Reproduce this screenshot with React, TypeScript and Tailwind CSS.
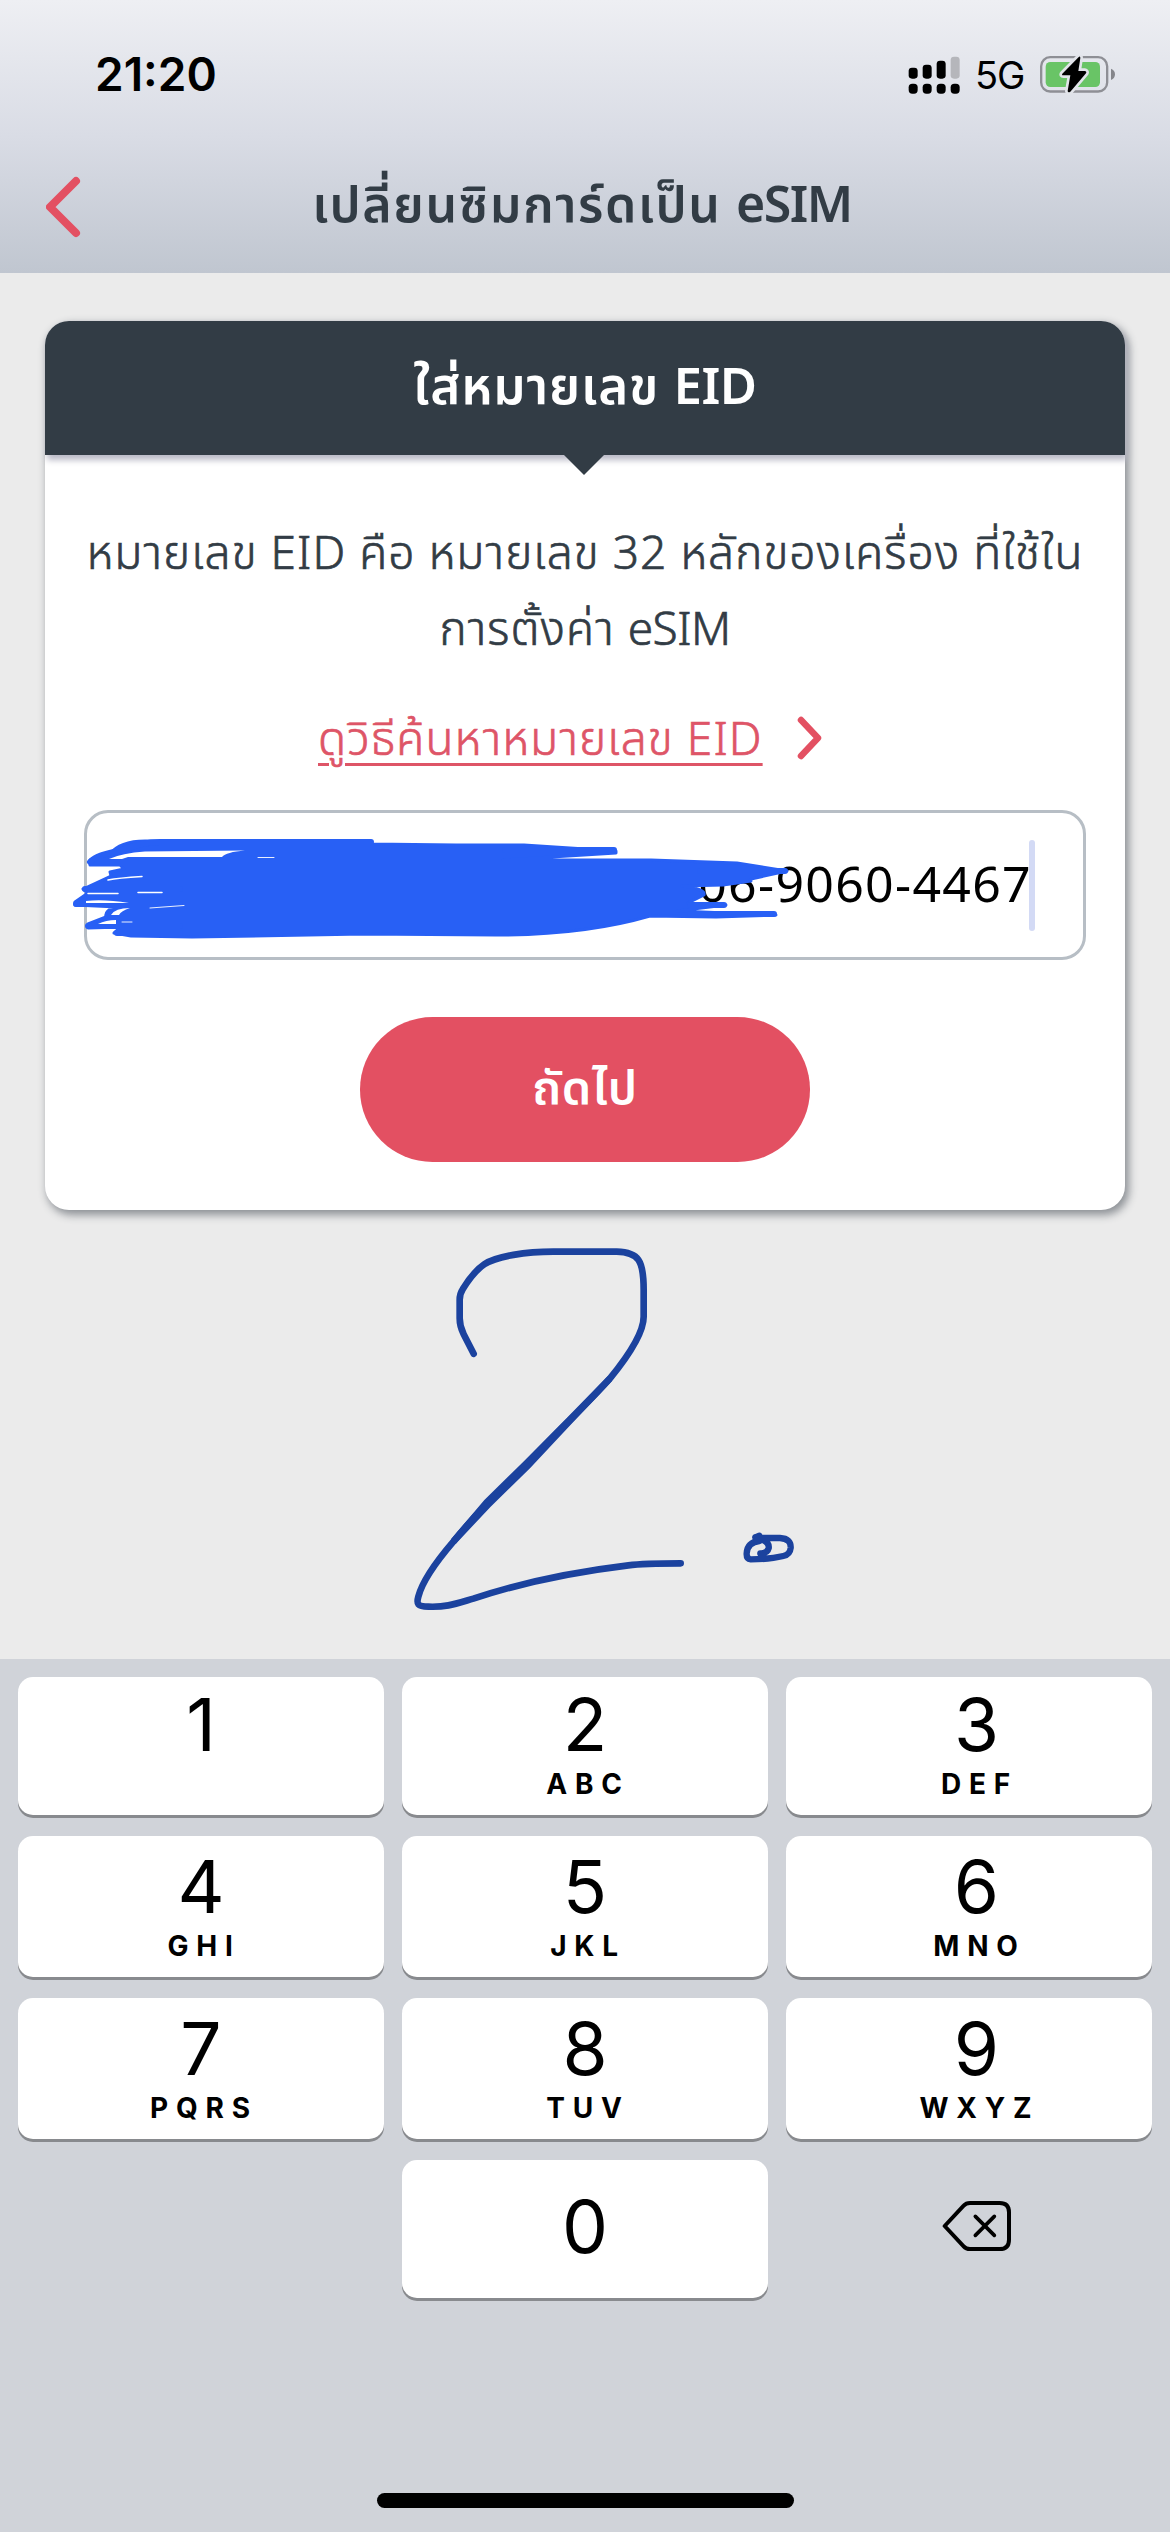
import { useState } from 'react'

const KEYS = [
  { digit: '1', letters: '' },
  { digit: '2', letters: 'ABC' },
  { digit: '3', letters: 'DEF' },
  { digit: '4', letters: 'GHI' },
  { digit: '5', letters: 'JKL' },
  { digit: '6', letters: 'MNO' },
  { digit: '7', letters: 'PQRS' },
  { digit: '8', letters: 'TUV' },
  { digit: '9', letters: 'WXYZ' },
]

const keyClass =
  'flex flex-col items-center rounded-[15px] bg-white text-black shadow-[0_3px_0_#888a8e]'

function SignalIcon() {
  return (
    <svg width="52" height="38" viewBox="0 0 156 114">
      <rect x="2" y="35" width="27" height="33" rx="10" />
      <rect x="44" y="26" width="27" height="42" rx="10" />
      <rect x="86" y="14" width="27" height="54" rx="10" />
      <rect x="128" y="2" width="27" height="66" rx="10" fill="#b5b6bb" />
      <rect x="2" y="83" width="27" height="30" rx="11" />
      <rect x="44" y="83" width="27" height="30" rx="11" />
      <rect x="86" y="83" width="27" height="30" rx="11" />
      <rect x="128" y="83" width="27" height="30" rx="11" />
    </svg>
  )
}

function BatteryIcon() {
  const bolt = 'M117 5L67 56Q64 61 70 61H91L83 108Q84 115 91 110L138 55Q141 49 134 48H115L121 9Q121 3 117 5Z'
  return (
    <svg width="76" height="40" viewBox="0 0 228 120">
      <rect x="3.500" y="6.500" width="198" height="103" rx="27" fill="none" stroke="#8e8f95" strokeWidth="7" />
      <rect x="17" y="21" width="163" height="75" rx="14" fill="#69c466" />
      <path d="M213 41Q225 46 225 58T213 75Z" fill="#85868b" />
      <path d={bolt} fill="#e2e4ea" stroke="#e2e4ea" strokeWidth="16" strokeLinejoin="round" />
      <path d={bolt} />
    </svg>
  )
}

function Header() {
  return (
    <header className="h-[273px] bg-linear-to-b from-[#eeeff3] via-[#d9dce5] to-[#c0c6d0]">
      <div className="h-[150px] flex items-start justify-between pl-[95px] pr-[54px] pt-[44px]">
        <span className="font-[Inter] text-[46px] leading-[60px] font-semibold">21:20</span>
        <div className="flex items-center mt-[1px]">
          <SignalIcon />
          <span className="ml-[15px] w-[51px] font-[Inter] text-[38px] leading-[60px] tracking-[-1px]">5G</span>
          <div className="ml-[14px]">
            <BatteryIcon />
          </div>
        </div>
      </div>
      <div className="flex h-[108px] items-center pl-[46px]">
        <button className="mt-[5px]">
          <svg width="36" height="62" viewBox="0 0 36 62" fill="none" stroke="#e35062" strokeWidth="8" strokeLinecap="round" strokeLinejoin="round">
            <path d="M30 5L4 31L30 57" />
          </svg>
        </button>
        <h1 className="mt-[-2px] w-[1000px] text-center text-[50px] leading-[76px] font-semibold tracking-[1.6px] text-[#323c45]">
          เปลี่ยนซิมการ์ดเป็น <span className="tracking-[-1.5px]">eSIM</span>
        </h1>
      </div>
    </header>
  )
}

function Scribble() {
  return (
    <svg className="absolute left-[-17px] top-[22px]" width="730" height="110" viewBox="70 836 730 110" fill="none" strokeLinecap="round" strokeLinejoin="round">
      <path
        d="M110 855Q120 842 145 842H371V845L456 846L524 846L616 852V854L503 861L580 861L651 861L737 864L787 872L751 880V882L723 886L682 887Q706 890 704 896L688 904L726 906L677 912L776 916L716 918L650 917Q585 936 496 936L363 935L192 938L131 937L114 934L121 928L88 929V925L106 918Q104 911 117 908L75 906V903L88 894L83 890L96 884L111 877L110 873L124 870L120 866L90 866V861Z"
        fill="#2860f5"
        stroke="#2860f5"
        strokeWidth="3"
      />
      <path d="M90 863Q98 855 120 852Q142 843 160 843H371M505 851H614M700 872H785M85 890H180M76 905H180M88 927H180M117 934H180M690 906H724M690 915H774" stroke="#2860f5" strokeWidth="6" />
      <path d="M109 860Q122 854 145 852.500L245 851.500Q226 853 222 858H128L122 860Z" fill="#fff" />
      <path d="M108 881Q118 879 142 877.500M88 894.500H118M138 893.500H162" stroke="#fff" strokeWidth="1.500" />
      <path d="M86 902Q104 900 129 904H86ZM111 916Q115 909 130 909Q121 912 119 916ZM98 925Q106 921 116 921V925Z" fill="#fff" />
      <path d="M150 909L184 906.500M122 923H132M258 858.500H274" stroke="#fff" strokeWidth="0.900" />
    </svg>
  )
}

function EidInput({ value }: { value: string }) {
  return (
    <div className="relative mx-[39px] mt-[34px] flex h-[150px] items-center justify-end rounded-[24px] border-3 border-[#b7bec5] pr-[48px]">
      <span className="mt-[-4px] text-[50px] leading-[76px] tracking-[1.3px] text-black">{value}</span>
      <span className="ml-[-3px] h-[91px] w-[6px] rounded-full bg-[#d3daf5]" />
      <Scribble />
    </div>
  )
}

function EidCard({ value }: { value: string }) {
  return (
    <section className="mx-[45px] mt-[48px] h-[889px] rounded-[24px] bg-white shadow-[3px_4px_8px_1px_#8d9196]">
      <div className="relative h-[134px] rounded-t-[24px] bg-[#323c45] text-center shadow-[2px_5px_6px_#b9b9c6]">
        <h2 className="pt-[25px] text-[51px] leading-[76px] font-semibold tracking-[0.9px] text-white">
          ใส่หมายเลข <span className="tracking-[-0.5px]">EID</span>
        </h2>
        <svg className="absolute left-[518px] top-[133px]" width="42" height="21" viewBox="0 0 42 21" fill="#323c45">
          <path d="M0 0H42L21 21Z" />
        </svg>
      </div>
      <p className="pt-[58px] text-center text-[46px] leading-[76px] font-light tracking-[1.05px] text-[#323c45] [-webkit-text-stroke:0.7px_#323c45]">
        หมายเลข EID คือ หมายเลข 32 หลักของเครื่อง ที่ใช้ใน
        <br />
        การตั้งค่า <span className="tracking-[-0.5px]">eSIM</span>
      </p>
      <div className="mt-[33px] flex h-[78px] items-center pl-[273px] text-[#de5567]">
        <a className="text-[46px] leading-[76px] font-light tracking-[1.1px] underline decoration-3 underline-offset-[8px] [-webkit-text-stroke:0.7px_#de5567]">
          ดูวิธีค้นหาหมายเลข EID
        </a>
        <svg className="ml-[34px] mt-[2px]" width="26" height="44" viewBox="0 0 26 44" fill="none" stroke="#e35062" strokeWidth="6.500" strokeLinecap="round" strokeLinejoin="round">
          <path d="M4 4L21 22L4 40" />
        </svg>
      </div>
      <EidInput value={value} />
      <button className="mx-auto mt-[57px] flex h-[145px] w-[450px] items-center justify-center rounded-full bg-[#e35062] pb-[8px] text-[47px] leading-[76px] font-semibold tracking-[0.7px] text-white">
        ถัดไป
      </button>
    </section>
  )
}

// Handwritten step number under the card
function StepMark() {
  return (
    <svg className="ml-[380px] mt-[10px] block" width="450" height="410" viewBox="0 0 1350 1230" fill="none" stroke="#1b429e" strokeWidth="20" strokeLinecap="round" strokeLinejoin="round">
      <path d="M281 401L251 343Q239 319 239 295V240Q239 221 248 208Q280 155 313 133C350 108 440 95 520 95H710C776 97 791 120 791 210V290C791 340 743 410 690 475C620 555 520 645 440 735C360 810 280 890 220 965C160 1035 124 1095 115 1130C109 1152 112 1160 145 1160C200 1162 225 1152 280 1136C400 1096 570 1057 745 1036Q790 1030 902 1030" />
      <path d="M683 468L697 482L577 609L450 745L332 860L227 972L213 958L313 840L430 725L561 593Z" fill="#1b429e" stroke="none" />
      <path d="M1126 952L1138 947M1126 952Q1170 962 1166 985Q1162 1001 1141 1000M1138 954H1200Q1234 956 1232 984Q1230 1004 1210 1008Q1170 1018 1112 1018Q1099 1017 1100 1000Q1102 967 1138 963" strokeWidth="19" />
    </svg>
  )
}

function Keyboard({ onKey, onDelete }: { onKey: (digit: string) => void; onDelete: () => void }) {
  return (
    <div className="flex h-[873px] flex-col bg-[#d0d3d9] px-[18px] pt-[18px] font-[Inter]">
      <div className="grid grid-cols-3 grid-rows-[138px_141px_141px_138px] gap-x-[18px] gap-y-[21px]">
        {KEYS.map(({ digit, letters }, i) => (
          <button
            key={digit}
            className={`${keyClass} ${i < 3 ? 'pt-[3px]' : 'pt-[6px]'} ${i % 3 === 2 ? 'pl-[15px]' : ''}`}
            onClick={() => onKey(digit)}
          >
            <span className="text-[73px] leading-[90px]">{digit}</span>
            <span className="mt-[-1px] pl-[6px] text-[28px] leading-[30px] font-bold tracking-[7.8px]">{letters}</span>
          </button>
        ))}
        <span />
        <button className={`${keyClass} pt-[22px]`} onClick={() => onKey('0')}>
          <span className="text-[73px] leading-[90px]">0</span>
        </button>
        <button className="flex items-center justify-center pb-[6px] pl-[16px]" onClick={onDelete}>
          <svg width="70" height="52" viewBox="0 0 210 156" fill="none" stroke="#000" strokeLinecap="round" strokeLinejoin="round">
            <path d="M8 78L65 17Q72 9 84 9H173Q201 9 201 37V119Q201 147 173 147H84Q72 147 65 139Z" strokeWidth="12" />
            <path d="M100 49L157 106M157 49L100 106" strokeWidth="11" />
          </svg>
        </button>
      </div>
      <div className="mx-auto mt-auto mb-[24px] h-[15px] w-[417px] rounded-full bg-black" />
    </div>
  )
}

export default function App() {
  const [eid, setEid] = useState('006-9060-4467')

  return (
    <div className="flex h-[2532px] w-[1170px] flex-col overflow-hidden bg-[#ebebeb] font-['Noto_Sans','Noto_Sans_Thai',sans-serif] text-black">
      <Header />
      <main className="flex-1">
        <EidCard value={eid} />
        <StepMark />
      </main>
      <Keyboard onKey={(digit) => setEid(eid + digit)} onDelete={() => setEid(eid.slice(0, -1))} />
    </div>
  )
}
